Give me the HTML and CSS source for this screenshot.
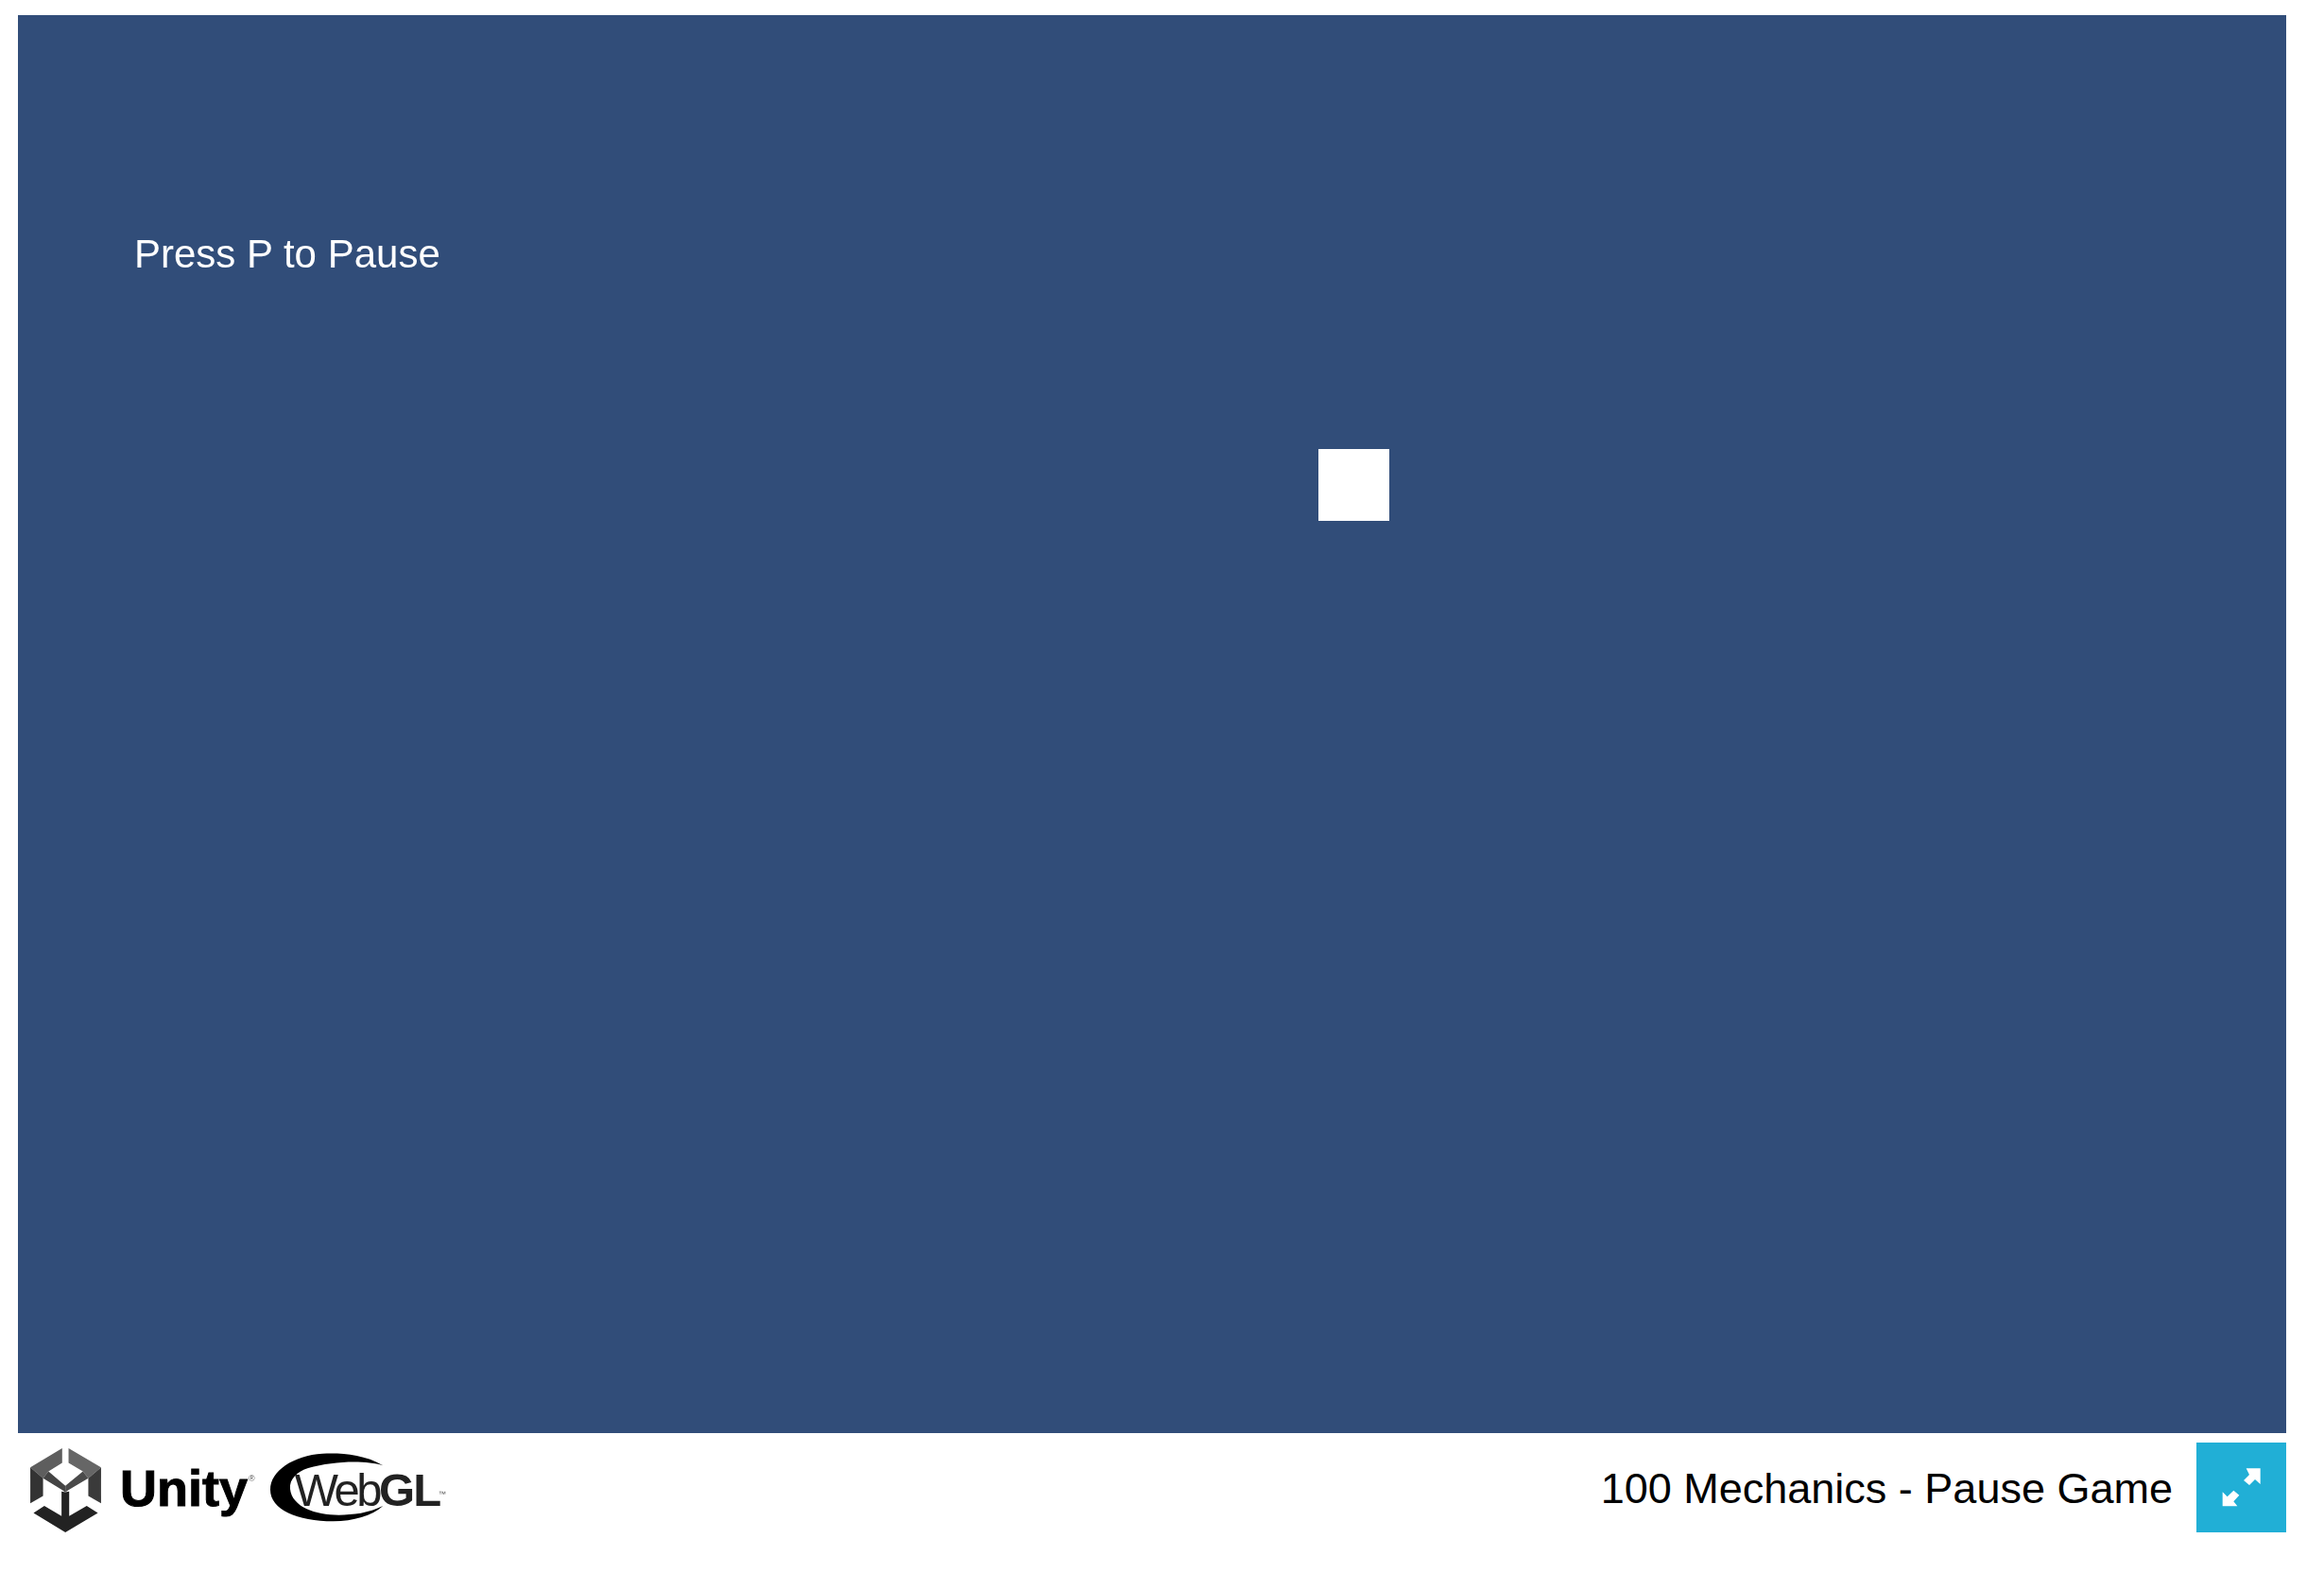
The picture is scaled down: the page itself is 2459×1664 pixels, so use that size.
FILE: index.html
```html
<!DOCTYPE html>
<html lang="en">
<head>
    <meta charset="UTF-8">
    <meta name="viewport" content="width=device-width, initial-scale=1.0">
    <title>100 Mechanics - Pause Game</title>
    <link rel="stylesheet" href="styles.css">
</head>
<body>
    <div class="game">
        <div class="game-text">Press P to Pause</div>
        <div class="player"></div>
    </div>
    <div class="footer">
        <div class="logos">
            <svg class="unity-cube" viewBox="68 22 222 264">
                <polygon fill="#5e5e5e" points="168,22 68,82 108,116 125,95 168,68"/>
                <polygon fill="#333" points="68,82 68,195 108,172 108,116"/>
                <polygon fill="#444" points="108,116 125,95 178,140 178,160 166,152"/>
                <polygon fill="#666" points="188,22 290,82 250,116 233,95 188,68"/>
                <polygon fill="#3a3a3a" points="290,82 290,195 250,172 250,116"/>
                <polygon fill="#4a4a4a" points="250,116 233,95 178,140 178,160 190,152"/>
                <polygon fill="#222" points="178,286 78,225 112,203 166,235 166,158 178,160 190,158 190,235 245,203 280,225"/>
            </svg>
            <span class="unity-word">Unity</span>
            <span class="unity-mark">®</span>
            <div class="webgl">
                <svg class="webgl-swoosh" viewBox="0 0 130 80">
                    <path d="M125 14 C103 1 75 0 58 1 C26 3 0 20 0 41 C0 63 30 76 70 76 C92 76 113 70 125 59 C109 67 92 69 76 69 C50 69 24 60 22 40 C21 29 30 21 42 17 C70 9 105 8 125 14 Z"/>
                </svg>
                <span class="webgl-word">Web<b>GL</b></span>
                <span class="webgl-tm">™</span>
            </div>
        </div>
        <div class="title-group">
            <div class="title">100 Mechanics - Pause Game</div>
            <div class="fullscreen">
                <svg viewBox="0 0 285 285">
                    <polygon points="158,82 203,82 203,132 186,117 168,135 150,120 168,102"/>
                    <polygon points="83,202 83,157 98,172 118,152 136,167 118,187 130,202"/>
                </svg>
            </div>
        </div>
    </div>
</body>
</html>
```

FILE: styles.css
```css
html, body {
    margin: 0;
    height: 100%;
    overflow: hidden;
    background-color: #fff;
}
body {
    padding: 16px 40px 0 19px;
    box-sizing: border-box;
    font-family: "Liberation Sans", Arial, sans-serif;
}
.game {
    position: relative;
    width: 2400px;
    height: 1500px;
    background-color: #314d79;
}
.game-text {
    position: absolute;
    left: 123px;
    top: 228px;
    font-size: 42px;
    line-height: 50px;
    color: #fff;
    filter: blur(0.4px);
}
.player {
    position: absolute;
    left: 1376px;
    top: 459px;
    width: 75px;
    height: 76px;
    background-color: #fff;
}
.footer {
    display: flex;
    justify-content: space-between;
    height: 105px;
    padding-top: 10px;
    box-sizing: border-box;
}
.logos {
    display: flex;
    align-items: flex-start;
    padding-left: 13px;
    filter: blur(0.7px);
}
.unity-cube {
    width: 75px;
    height: 89px;
    margin-top: 6px;
}
.unity-word {
    margin: 18px 0 0 20px;
    font-size: 54px;
    line-height: 60px;
    font-weight: bold;
    color: #000;
    -webkit-text-stroke: 1px #000;
}
.unity-mark {
    margin: 32px 0 0 1px;
    font-size: 9px;
    line-height: 12px;
    color: #555;
}
.webgl {
    position: relative;
    width: 190px;
    height: 90px;
    margin-left: 14px;
}
.webgl-swoosh {
    position: absolute;
    left: 2px;
    top: 9px;
    width: 124px;
    height: 80px;
}
.webgl-word {
    position: absolute;
    left: 28px;
    top: 22px;
    font-size: 49px;
    line-height: 56px;
    letter-spacing: -3.5px;
    color: #222;
}
.webgl-word b {
    letter-spacing: -2px;
}
.webgl-tm {
    position: absolute;
    left: 180px;
    top: 50px;
    font-size: 8px;
    line-height: 10px;
    color: #555;
}
.title-group {
    display: flex;
    align-items: flex-start;
    gap: 25px;
}
.title {
    margin-top: 24px;
    font-size: 45px;
    line-height: 50px;
    color: #000;
}
.fullscreen {
    width: 95px;
    height: 95px;
    background-color: #21afd6;
}
.fullscreen svg {
    display: block;
    width: 95px;
    height: 95px;
    fill: #fff;
    filter: blur(0.5px);
}
```
